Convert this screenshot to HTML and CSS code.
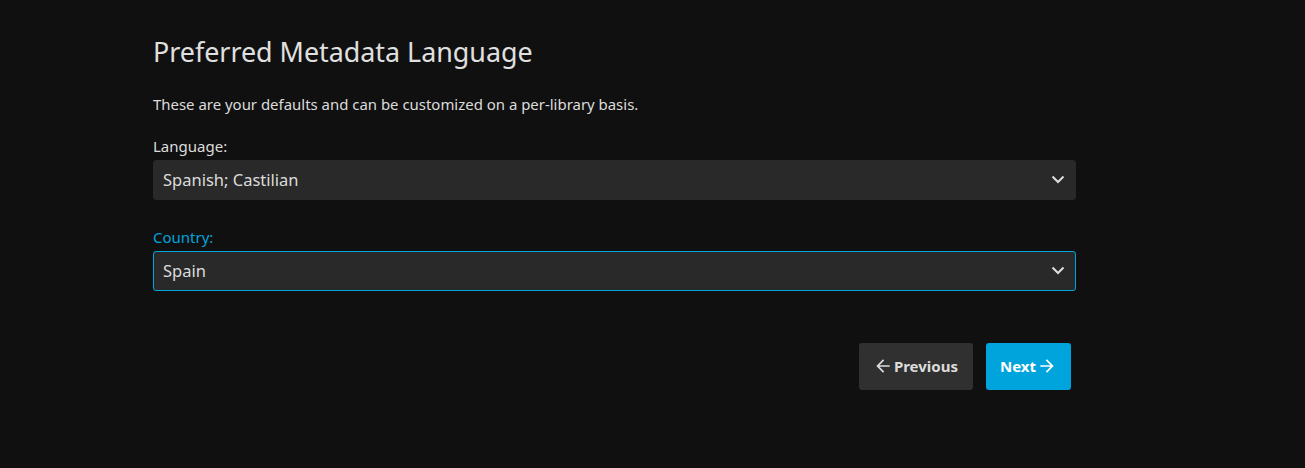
FILE: index.html
```html
<!DOCTYPE html>
<html>
<head>
<meta charset="utf-8">
<link rel="stylesheet" href="styles.css">
</head>
<body>
<div class="page">
  <h1 class="title">Preferred Metadata Language</h1>
  <p class="desc">These are your defaults and can be customized on a per-library basis.</p>
  <div class="field">
    <label class="label">Language:</label>
    <div class="select">
      <span>Spanish; Castilian</span>
      <svg class="chev" width="14" height="9" viewBox="0 0 14 9"><path d="M1.5 1.5 L7 7 L12.5 1.5" fill="none" stroke="#ddd" stroke-width="2"/></svg>
    </div>
  </div>
  <div class="field">
    <label class="label focused">Country:</label>
    <div class="select focus">
      <span>Spain</span>
      <svg class="chev" width="14" height="9" viewBox="0 0 14 9"><path d="M1.5 1.5 L7 7 L12.5 1.5" fill="none" stroke="#ddd" stroke-width="2"/></svg>
    </div>
  </div>
  <div class="buttons">
    <button class="btn btn-prev"><svg class="ico" width="20" height="20" viewBox="0 0 24 24"><path d="M20 11H7.83l5.59-5.59L12 4l-8 8 8 8 1.41-1.41L7.83 13H20v-2z" fill="#ddd"/></svg>Previous</button>
    <button class="btn btn-next">Next<svg class="ico" width="20" height="20" viewBox="0 0 24 24"><path d="M12 4l-1.41 1.41L16.17 11H4v2h12.17l-5.58 5.59L12 20l8-8z" fill="#fff"/></svg></button>
  </div>
</div>
</body>
</html>
```
FILE: styles.css
```css
html, body {
  margin: 0;
  padding: 0;
  background: #101010;
  height: 100%;
}
body {
  font-family: "Noto Sans", sans-serif;
  color: rgba(255,255,255,0.87);
}
.page {
  width: 923px;
  margin-left: 153px;
  padding-top: 33px;
}
.title {
  margin: 0;
  font-size: 26.85px;
  font-weight: 400;
  line-height: 38px;
  color: #e0e0e0;
}
.desc {
  margin: 23px 0 0;
  font-size: 14.95px;
  line-height: 20px;
  color: #dcdcdc;
}
.field {
  margin-top: 22px;
}
.field + .field {
  margin-top: 27px;
}
.label {
  display: block;
  font-size: 15px;
  line-height: 20px;
  margin-bottom: 4px;
  color: #dcdcdc;
}
.label.focused {
  color: #00a4dc;
}
.select {
  height: 40px;
  box-sizing: border-box;
  background: #292929;
  border: 1px solid #292929;
  border-radius: 3px;
  display: flex;
  align-items: center;
  justify-content: space-between;
  padding: 0 10px 1px 9px;
  font-size: 16.5px;
  color: #dcdcdc;
}
.select.focus {
  border-color: #00a4dc;
}
.buttons {
  display: flex;
  justify-content: flex-end;
  gap: 13px;
  margin-top: 52px;
  padding-right: 5px;
}
.btn {
  font-family: "Noto Sans", sans-serif;
  font-weight: 700;
  font-size: 15px;
  height: 47px;
  border: 0;
  border-radius: 3px;
  display: flex;
  align-items: center;
  gap: 1px;
  padding-bottom: 2px;
}
.btn-prev {
  background: #303030;
  color: #dcdcdc;
  padding-left: 14px;
  padding-right: 15px;
}
.btn-next {
  background: #00a4dc;
  color: #fff;
  padding-left: 14px;
  padding-right: 14px;
}
```
